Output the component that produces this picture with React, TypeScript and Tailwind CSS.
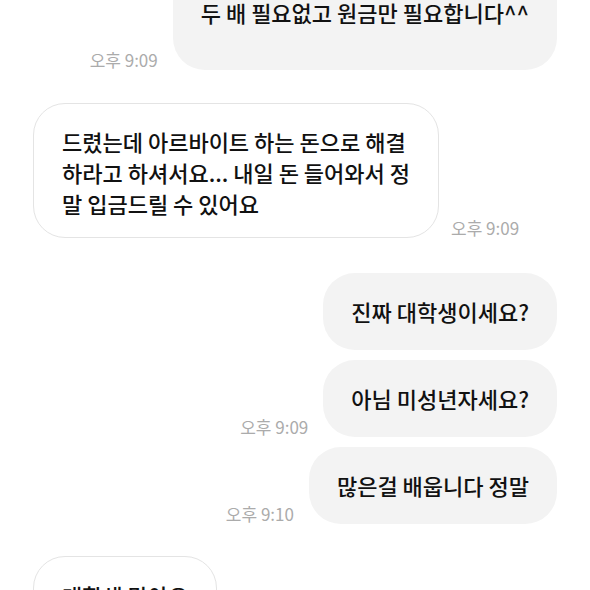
import React from "react";

const font = "font-['Noto_Sans_CJK_KR','Noto_Sans',sans-serif]";

function Time({ t }: { t: string }) {
  return (
    <span className="text-[17px] leading-[20px] text-[#ababab] whitespace-nowrap">
      {t}
    </span>
  );
}

function Sent({
  children,
  time,
  className = "",
  bubbleClass = "py-[23px]",
}: {
  children: React.ReactNode;
  time?: string;
  className?: string;
  bubbleClass?: string;
}) {
  return (
    <div className={`flex justify-end items-end gap-[15px] pr-[33px] ${className}`}>
      {time && <Time t={time} />}
      <div
        className={`bg-[#f3f3f3] rounded-[32px] px-7 text-[22px] leading-[31px] font-medium text-[#111111] whitespace-nowrap ${bubbleClass}`}
      >
        {children}
      </div>
    </div>
  );
}

function Received({
  children,
  time,
  className = "",
  bubbleClass = "py-[23px]",
}: {
  children: React.ReactNode;
  time?: string;
  className?: string;
  bubbleClass?: string;
}) {
  return (
    <div className={`flex items-end gap-[12px] pl-[33px] ${className}`}>
      <div
        className={`bg-white border border-[#e4e4e4] rounded-[32px] px-7 text-[22px] leading-[31px] font-medium text-[#111111] whitespace-nowrap ${bubbleClass}`}
      >
        {children}
      </div>
      {time && <Time t={time} />}
    </div>
  );
}

export default function App() {
  return (
    <div className={`w-[590px] h-[590px] overflow-hidden bg-white flex flex-col ${font}`}>
      <Sent time="오후 9:09" className="-mt-[40px]" bubbleClass="pt-[37px] pb-[42px]">
        두 배 필요없고 원금만 필요합니다^^
      </Sent>

      <Received time="오후 9:09" className="mt-[33px]" bubbleClass="pt-[22px] pb-[18px]">
        드렸는데 아르바이트 하는 돈으로 해결
        <br />
        하라고 하셔서요... 내일 돈 들어와서 정
        <br />말 입금드릴 수 있어요
      </Received>

      <Sent className="mt-[35px]">진짜 대학생이세요?</Sent>
      <Sent time="오후 9:09" className="mt-[10px]">
        아님 미성년자세요?
      </Sent>
      <Sent time="오후 9:10" className="mt-[10px]">
        많은걸 배웁니다 정말
      </Sent>

      <Received className="mt-[32px]">대학생 맞아요</Received>
    </div>
  );
}
